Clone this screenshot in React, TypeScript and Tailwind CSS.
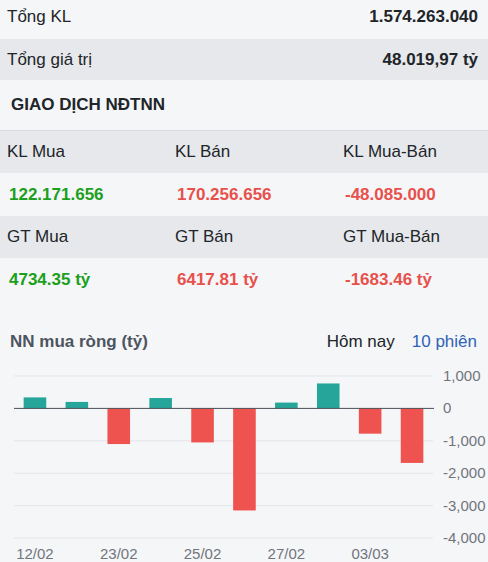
const ROWS = [
  { label: 'Tổng KL', value: '1.574.263.040', shaded: false },
  { label: 'Tổng giá trị', value: '48.019,97 tỷ', shaded: true },
]

const UP = 'text-[#1c9f1c]'
const DOWN = 'text-[#e8504c]'

// net foreign buy/sell per session, billions
const SESSIONS = [
  { date: '12/02', value: 340 },
  { date: '', value: 200 },
  { date: '23/02', value: -1100 },
  { date: '', value: 320 },
  { date: '25/02', value: -1050 },
  { date: '', value: -3150 },
  { date: '27/02', value: 180 },
  { date: '', value: 770 },
  { date: '03/03', value: -780 },
  { date: '', value: -1683 },
]

const TICKS = [1000, 0, -1000, -2000, -3000, -4000]

function NetChart() {
  const top = 24
  const step = 32.4
  const left = 14
  const right = 433
  const band = (right - left) / SESSIONS.length
  const barW = 22.6
  const y = (v: number) => top + ((1000 - v) / 1000) * step
  const zero = y(0)

  return (
    <svg width={488} height={211} className="block">
      {TICKS.map((t) => (
        <g key={t}>
          {t !== 0 && (
            <line x1={left} x2={right} y1={y(t)} y2={y(t)} stroke="#e3e5e9" strokeWidth={1} />
          )}
          <text
            x={443}
            y={y(t) + 5}
            fontSize={15}
            fill="#70757d"
            fontFamily="'Liberation Sans', Arial, sans-serif"
          >
            {t === 0 ? '0' : t.toLocaleString('en-US')}
          </text>
        </g>
      ))}
      {SESSIONS.map((s, i) => {
        const cx = left + band * i + band / 2
        const h = Math.abs(y(s.value) - zero)
        return (
          <g key={i}>
            <rect
              x={cx - barW / 2}
              y={s.value >= 0 ? zero - h : zero}
              width={barW}
              height={h}
              fill={s.value >= 0 ? '#26a69a' : '#ef5350'}
            />
            {s.date && (
              <text
                x={cx}
                y={207}
                textAnchor="middle"
                fontSize={15}
                fill="#70757d"
                fontFamily="'Liberation Sans', Arial, sans-serif"
              >
                {s.date}
              </text>
            )}
          </g>
        )
      })}
      <line x1={left} x2={right + 1} y1={zero} y2={zero} stroke="#4a4f57" strokeWidth={1} />
    </svg>
  )
}

function StatGrid({
  heads,
  values,
}: {
  heads: string[]
  values: { text: string; up: boolean }[]
}) {
  return (
    <>
      <div className="grid h-[42px] grid-cols-[168px_168px_1fr] items-center bg-[#e6e8eb] px-[7px]">
        {heads.map((h) => (
          <span key={h}>{h}</span>
        ))}
      </div>
      <div className="grid h-[43px] grid-cols-[168px_168px_1fr] items-center px-[7px] font-bold">
        {values.map((v) => (
          <span key={v.text} className={`pl-[2px] ${v.up ? UP : DOWN}`}>
            {v.text}
          </span>
        ))}
      </div>
    </>
  )
}

export default function App() {
  return (
    <div className="h-[562px] w-[488px] overflow-hidden bg-[#f5f6f8] font-['Liberation_Sans',Arial,sans-serif] text-[17px] leading-5 text-[#212529]">
      {ROWS.map((r) => (
        <div
          key={r.label}
          className={
            r.shaded
              ? 'flex h-[41px] items-center justify-between bg-[#e6e8eb] px-[7px]'
              : 'flex h-[39px] items-start justify-between px-[7px] pt-[7px]'
          }
        >
          <span>{r.label}</span>
          <span className="pr-[3px] font-bold">{r.value}</span>
        </div>
      ))}

      <div className="flex h-[50px] items-center px-[11px] font-bold">GIAO DỊCH NĐTNN</div>

      <div className="border-t border-[#d9dce1]">
        <StatGrid
          heads={['KL Mua', 'KL Bán', 'KL Mua-Bán']}
          values={[
            { text: '122.171.656', up: true },
            { text: '170.256.656', up: false },
            { text: '-48.085.000', up: false },
          ]}
        />
        <StatGrid
          heads={['GT Mua', 'GT Bán', 'GT Mua-Bán']}
          values={[
            { text: '4734.35 tỷ', up: true },
            { text: '6417.81 tỷ', up: false },
            { text: '-1683.46 tỷ', up: false },
          ]}
        />
      </div>

      <div className="flex items-center justify-between px-[10px] pr-[11px] pt-[31px]">
        <span className="font-bold text-[#4d5560]">NN mua ròng (tỷ)</span>
        <div className="flex gap-[17px]">
          <span>Hôm nay</span>
          <span className="text-[#2f62b5]">10 phiên</span>
        </div>
      </div>

      <NetChart />
    </div>
  )
}
